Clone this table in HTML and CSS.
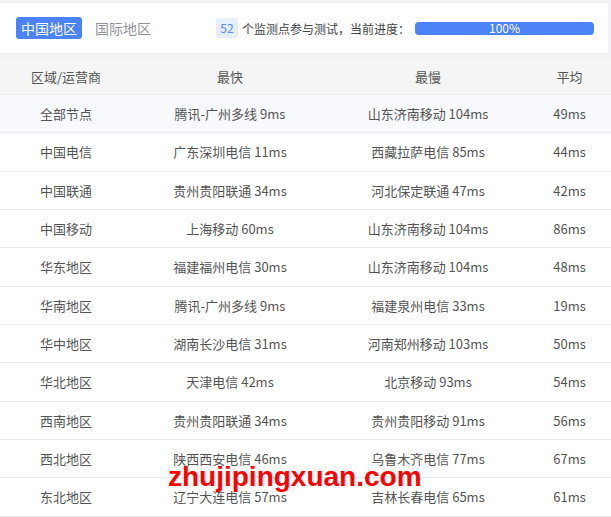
FILE: index.html
```html
<!DOCTYPE html>
<html lang="zh-CN">
<head>
    <meta charset="UTF-8">
    <title>测速结果</title>
    <link rel="stylesheet" href="styles.css">
</head>
<body>
    <div class="header">
        <div class="tabs">
            <span class="tab active">中国地区</span>
            <span class="tab">国际地区</span>
        </div>
        <div class="summary">
            <span class="count">52</span>
            <span class="summary-text">个监测点参与测试，当前进度：</span>
            <div class="progress">
                <div class="progress-bar" style="width: 100%;">100%</div>
            </div>
        </div>
    </div>

    <div class="result">
        <div class="row head">
            <div>区域/运营商</div>
            <div>最快</div>
            <div>最慢</div>
            <div>平均</div>
        </div>
        <div class="row highlight">
            <div>全部节点</div>
            <div>腾讯-广州多线 9ms</div>
            <div>山东济南移动 104ms</div>
            <div>49ms</div>
        </div>
        <div class="row">
            <div>中国电信</div>
            <div>广东深圳电信 11ms</div>
            <div>西藏拉萨电信 85ms</div>
            <div>44ms</div>
        </div>
        <div class="row">
            <div>中国联通</div>
            <div>贵州贵阳联通 34ms</div>
            <div>河北保定联通 47ms</div>
            <div>42ms</div>
        </div>
        <div class="row">
            <div>中国移动</div>
            <div>上海移动 60ms</div>
            <div>山东济南移动 104ms</div>
            <div>86ms</div>
        </div>
        <div class="row">
            <div>华东地区</div>
            <div>福建福州电信 30ms</div>
            <div>山东济南移动 104ms</div>
            <div>48ms</div>
        </div>
        <div class="row">
            <div>华南地区</div>
            <div>腾讯-广州多线 9ms</div>
            <div>福建泉州电信 33ms</div>
            <div>19ms</div>
        </div>
        <div class="row">
            <div>华中地区</div>
            <div>湖南长沙电信 31ms</div>
            <div>河南郑州移动 103ms</div>
            <div>50ms</div>
        </div>
        <div class="row">
            <div>华北地区</div>
            <div>天津电信 42ms</div>
            <div>北京移动 93ms</div>
            <div>54ms</div>
        </div>
        <div class="row">
            <div>西南地区</div>
            <div>贵州贵阳联通 34ms</div>
            <div>贵州贵阳移动 91ms</div>
            <div>56ms</div>
        </div>
        <div class="row">
            <div>西北地区</div>
            <div>陕西西安电信 46ms</div>
            <div>乌鲁木齐电信 77ms</div>
            <div>67ms</div>
        </div>
        <div class="row">
            <div>东北地区</div>
            <div>辽宁大连电信 57ms</div>
            <div>吉林长春电信 65ms</div>
            <div>61ms</div>
        </div>
        <div class="watermark">zhujipingxuan.com</div>
    </div>
</body>
</html>
```

FILE: styles.css
```css
body {
    margin: 0;
    background-color: #f0f2f5;
    font-family: "Noto Sans CJK SC", "Noto Sans", sans-serif;
    color: #555;
}

.header {
    display: flex;
    align-items: center;
    height: 50px;
    margin-top: 3px;
    margin-right: 3px;
    padding: 0 14px 0 16px;
    background: white;
}

.tabs {
    display: flex;
    align-items: center;
    gap: 8px;
}

.tab {
    padding: 0 5px;
    height: 22px;
    line-height: 22px;
    font-size: 14px;
    color: #909399;
    border-radius: 3px;
}

.tab.active {
    background-color: #4c84f7;
    color: white;
}

.summary {
    display: flex;
    align-items: center;
    margin-left: auto;
}

.count {
    width: 22px;
    height: 20px;
    line-height: 20px;
    text-align: center;
    font-size: 12px;
    color: #5b8af5;
    background-color: #e5edff;
    border-radius: 3px;
}

.summary-text {
    margin-left: 4px;
    font-size: 12px;
    color: #444;
}

.progress {
    width: 179px;
    height: 13px;
    margin-left: 5px;
    background-color: #ebeef5;
    border-radius: 4px;
}

.progress-bar {
    display: flex;
    align-items: center;
    justify-content: center;
    height: 100%;
    line-height: 1;
    font-size: 12px;
    color: white;
    background-color: #4c84f7;
    border-radius: 4px;
}

.result {
    position: relative;
    margin-top: 5px;
    background: white;
}

.row {
    display: grid;
    grid-template-columns: 132px 196px 200px 1fr;
    align-items: center;
    height: 38.33px;
    box-sizing: border-box;
    border-bottom: 1px solid #e9ecf1;
    font-size: 13px;
    text-align: center;
}

.row.head {
    height: 37px;
    background-color: #f5f5f6;
    color: #555;
}

.row.highlight {
    background-color: #f8f9fd;
}

.watermark {
    position: absolute;
    left: 168px;
    top: 403px;
    font-family: "Liberation Sans", sans-serif;
    font-weight: bold;
    font-size: 28px;
    color: #ff0000;
}
```
